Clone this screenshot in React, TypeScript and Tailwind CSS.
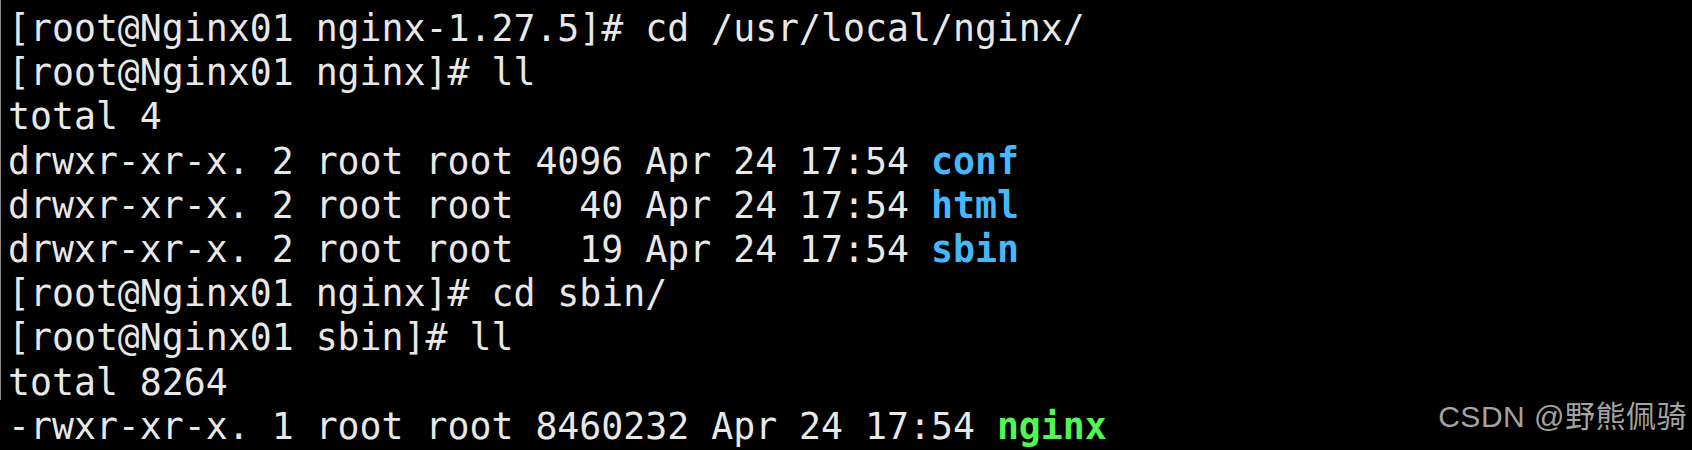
import React from "react";

const W = "text-[#e8e8e8]";

type Seg = { t: string; c?: string };

const lines: Seg[][] = [
  [{ t: "[root@Nginx01 nginx-1.27.5]# cd /usr/local/nginx/" }],
  [{ t: "[root@Nginx01 nginx]# ll" }],
  [{ t: "total 4" }],
  [{ t: "drwxr-xr-x. 2 root root 4096 Apr 24 17:54 " }, { t: "conf", c: "blue" }],
  [{ t: "drwxr-xr-x. 2 root root   40 Apr 24 17:54 " }, { t: "html", c: "blue" }],
  [{ t: "drwxr-xr-x. 2 root root   19 Apr 24 17:54 " }, { t: "sbin", c: "blue" }],
  [{ t: "[root@Nginx01 nginx]# cd sbin/" }],
  [{ t: "[root@Nginx01 sbin]# ll" }],
  [{ t: "total 8264" }],
  [{ t: "-rwxr-xr-x. 1 root root 8460232 Apr 24 17:54 " }, { t: "nginx", c: "green" }],
];

export default function App() {
  return (
    <div className="relative w-[1692px] h-[450px] overflow-hidden bg-black">
      <div className="absolute left-0 top-0 h-[400px] w-[1px] bg-[#8a8a8a]" />
      <div
        className={`pl-[8px] pt-[7px] text-[36.5px] leading-[44.2px] whitespace-pre ${W}`}
        style={{ fontFamily: '"DejaVu Sans Mono", monospace' }}
      >
        {lines.map((segs, i) => (
          <div key={i}>
            {segs.map((s, j) =>
              s.c === "blue" ? (
                <span key={j} className="font-bold text-[#45b8fb]">
                  {s.t}
                </span>
              ) : s.c === "green" ? (
                <span key={j} className="font-bold text-[#52f552]">
                  {s.t}
                </span>
              ) : (
                <span key={j}>{s.t}</span>
              )
            )}
          </div>
        ))}
        <div>
          <span>{"                     "}</span>
          <span className="inline-block w-[22px] h-[40px] bg-[#00ff00] align-top mt-[1px]" />
        </div>
      </div>
      <div
        className="absolute right-[5px] top-[399px] text-[30px] leading-[36px] tracking-[0.5px] text-[#a3a3a3] whitespace-nowrap"
        style={{ fontFamily: '"Liberation Sans", "Noto Sans CJK SC", sans-serif' }}
      >
        CSDN @野熊佩骑
      </div>
    </div>
  );
}
